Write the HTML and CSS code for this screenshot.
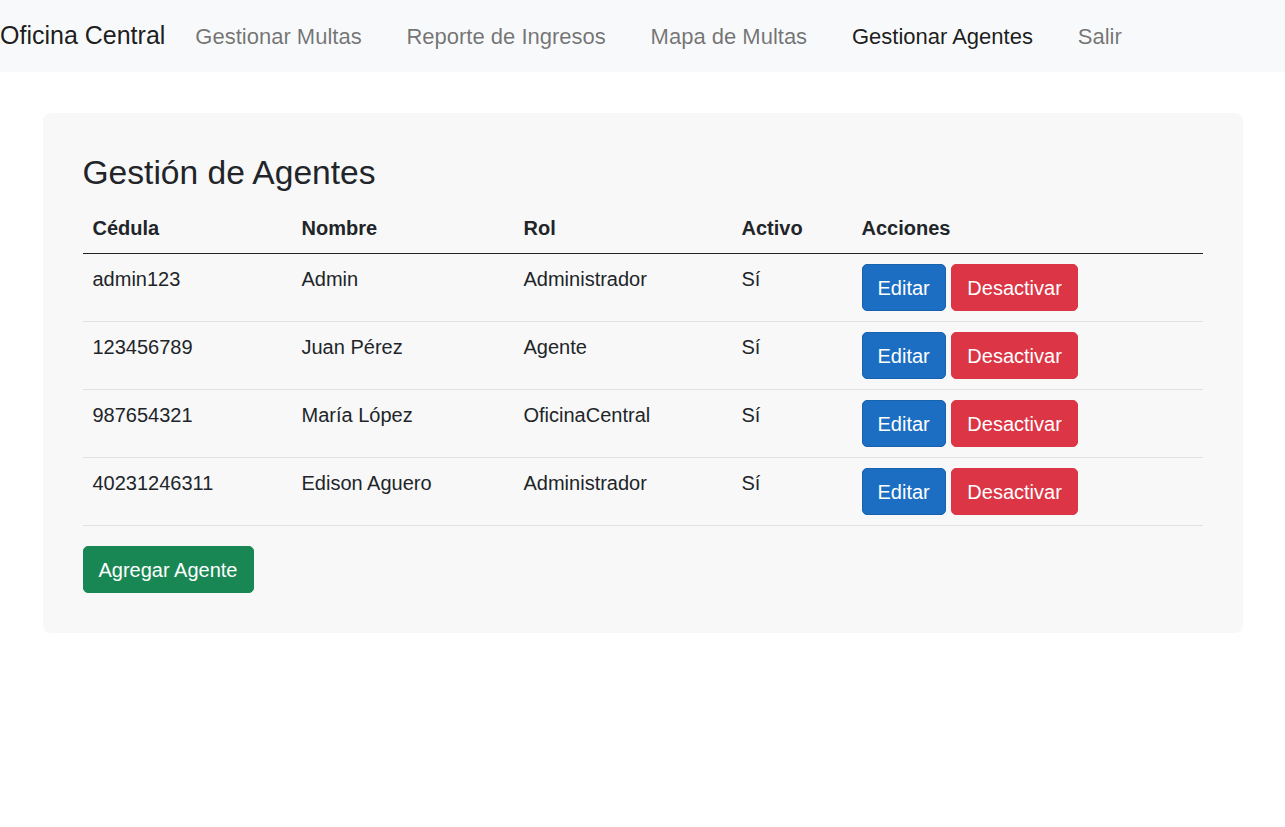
FILE: index.html
```html
<!DOCTYPE html>
<html lang="es">
<head>
<meta charset="utf-8">
<title>Gestión de Agentes</title>
<link rel="stylesheet" href="styles.css">
</head>
<body>
<nav class="navbar">
  <a class="brand" href="#">Oficina Central</a>
  <ul class="nav-list">
    <li><a class="nav-link" href="#">Gestionar Multas</a></li>
    <li><a class="nav-link" href="#">Reporte de Ingresos</a></li>
    <li><a class="nav-link" href="#">Mapa de Multas</a></li>
    <li><a class="nav-link active" href="#">Gestionar Agentes</a></li>
    <li><a class="nav-link" href="#">Salir</a></li>
  </ul>
</nav>
<main class="card">
  <h2 class="title">Gestión de Agentes</h2>
  <table class="table">
    <thead>
      <tr>
        <th class="c1">Cédula</th>
        <th class="c2">Nombre</th>
        <th class="c3">Rol</th>
        <th class="c4">Activo</th>
        <th class="c5">Acciones</th>
      </tr>
    </thead>
    <tbody>
      <tr>
        <td>admin123</td><td>Admin</td><td>Administrador</td><td>Sí</td>
        <td><button class="btn btn-primary">Editar</button> <button class="btn btn-danger">Desactivar</button></td>
      </tr>
      <tr>
        <td>123456789</td><td>Juan Pérez</td><td>Agente</td><td>Sí</td>
        <td><button class="btn btn-primary">Editar</button> <button class="btn btn-danger">Desactivar</button></td>
      </tr>
      <tr>
        <td>987654321</td><td>María López</td><td>OficinaCentral</td><td>Sí</td>
        <td><button class="btn btn-primary">Editar</button> <button class="btn btn-danger">Desactivar</button></td>
      </tr>
      <tr>
        <td>40231246311</td><td>Edison Aguero</td><td>Administrador</td><td>Sí</td>
        <td><button class="btn btn-primary">Editar</button> <button class="btn btn-danger">Desactivar</button></td>
      </tr>
    </tbody>
  </table>
  <button class="btn btn-success">Agregar Agente</button>
</main>
</body>
</html>
```

FILE: styles.css
```css
* { box-sizing: border-box; }

html { font-size: 20px; }

body {
  margin: 0;
  font-family: "Liberation Sans", Arial, sans-serif;
  font-size: 20px;
  line-height: 1.5;
  color: #212529;
  background: #fff;
}

.navbar {
  display: flex;
  align-items: center;
  height: 72px;
  padding: 0;
  background: #f8f9fa;
}

.brand {
  font-size: 25px;
  color: rgba(0, 0, 0, 0.9);
  text-decoration: none;
  margin-right: 30px;
}

.nav-list {
  display: flex;
  gap: 44.8px;
  list-style: none;
  margin: 0;
  padding: 0;
}

.nav-link {
  font-size: 22px;
  color: rgba(0, 0, 0, 0.55);
  text-decoration: none;
}

.nav-link.active {
  color: rgba(0, 0, 0, 0.9);
}

.card {
  display: block;
  max-width: 1200px;
  margin: 41px auto 0;
  padding: 40px;
  background: #f8f8f8;
  border-radius: 8px;
}

.title {
  margin: 0 0 10px;
  font-size: 33.6px;
  font-weight: 400;
  line-height: 40px;
}

.table {
  width: 100%;
  border-collapse: collapse;
  margin-bottom: 20px;
}

.table th,
.table td {
  padding: 10px;
  text-align: left;
  vertical-align: top;
  border-bottom: 1px solid #dee2e6;
}

.table th {
  font-weight: 700;
  border-bottom-color: #212529;
}

.c1 { width: 209px; }
.c2 { width: 222px; }
.c3 { width: 218px; }
.c4 { width: 120px; }

.btn {
  display: inline-block;
  font-family: inherit;
  font-size: 20px;
  line-height: 30px;
  padding: 8px 15px 7px;
  border: 1px solid transparent;
  border-radius: 5px;
  color: #fff;
  cursor: pointer;
  vertical-align: middle;
}

.btn-primary { background: #1b6ec2; border-color: #1861ac; }
.btn-danger { background: #dc3545; border-color: #dc3545; }
.btn-success { background: #198754; border-color: #198754; }
```
